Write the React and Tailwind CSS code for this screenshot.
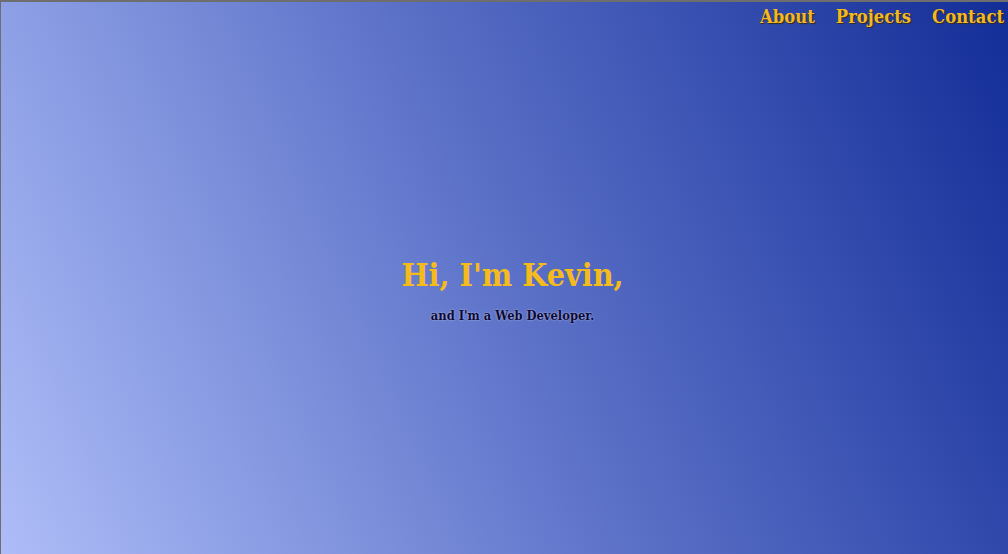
export default function App() {
  return (
    <div className="h-[554px] w-[1008px] overflow-hidden border-t-2 border-l border-[#6e6e6e] bg-[linear-gradient(66deg,#aebdf8_0%,#5c72c8_50%,#132d98_100%)] font-['DejaVu_Serif_Condensed','DejaVu_Serif',serif] font-stretch-condensed flex flex-col">
      {/* Nav */}
      <nav className="flex justify-end gap-[21px] pr-1 pt-px">
        {['About', 'Projects', 'Contact'].map(l => (
          <a
            key={l}
            className="text-[18.3px] font-bold text-[#f3b824] [text-shadow:1px_1px_1px_#3a2a10]"
          >
            {l}
          </a>
        ))}
      </nav>

      {/* Hero */}
      <div className="flex-1 flex flex-col items-center justify-center pl-[16px] pb-[4px]">
        <h1 className="text-[32px] font-semibold text-[#f5bb1c] leading-tight">Hi, I'm Kevin,</h1>
        <p className="mt-[11px] text-[12.8px] font-bold text-[#0a0a35] [text-shadow:0_0_2px_#c9c9e8]">
          and I'm a Web Developer.
        </p>
      </div>
    </div>
  );
}
